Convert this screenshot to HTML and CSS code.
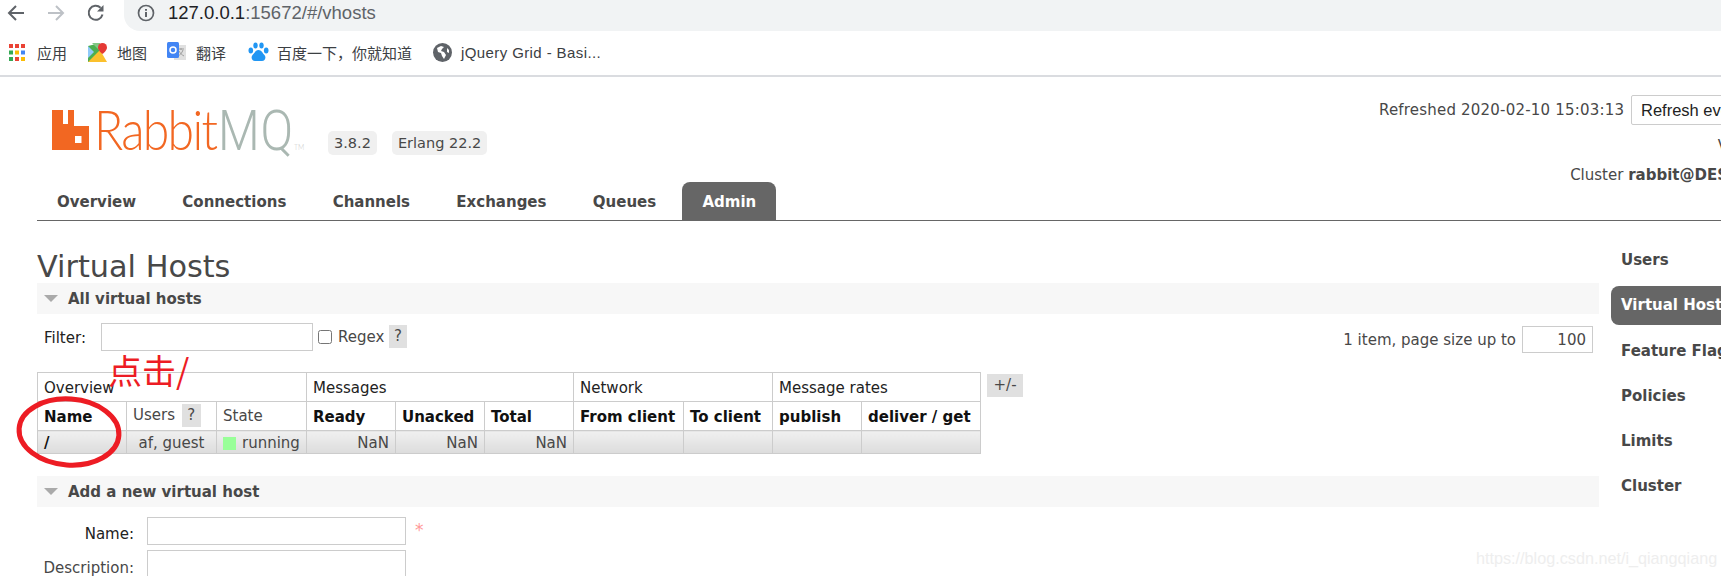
FILE: index.html
```html
<!DOCTYPE html>
<html lang="en">
<head>
<meta charset="utf-8">
<title>RabbitMQ Management</title>
<link rel="stylesheet" href="styles.css">
</head>
<body>
<div class="browser">
  <div class="toolbar">
    <svg class="nav" width="20" height="20" viewBox="0 0 20 20"><path d="M18 10H4M10 3l-7 7 7 7" fill="none" stroke="#5f6368" stroke-width="2"/></svg>
    <svg class="nav" width="20" height="20" viewBox="0 0 20 20"><path d="M2 10h14M10 3l7 7-7 7" fill="none" stroke="#bdc1c6" stroke-width="2"/></svg>
    <svg class="nav" width="20" height="20" viewBox="0 0 20 20"><path d="M16.5 11.5A7 7 0 1 1 14.6 4.8" fill="none" stroke="#5f6368" stroke-width="2"/><path d="M17.5 2v6.5H11z" fill="#5f6368"/></svg>
    <div class="omnibox">
      <svg width="18" height="18" viewBox="0 0 18 18"><circle cx="9" cy="9" r="7.5" fill="none" stroke="#5f6368" stroke-width="1.7"/><path d="M9 8v5M9 5v1.8" stroke="#5f6368" stroke-width="2"/></svg>
      <span class="url"><span class="host">127.0.0.1</span>:15672/#/vhosts</span>
    </div>
  </div>
  <div class="bookmarks">
    <div class="bm bm-apps">
      <svg width="16" height="17" viewBox="0 0 16 17">
        <g><rect x="0" width="4" height="4" fill="#ea4335"/><rect x="6" width="4" height="4" fill="#ea4335"/><rect x="12" width="4" height="4" fill="#ea4335"/>
        <rect y="6.500" width="4" height="4" fill="#34a853"/><rect x="6" y="6.500" width="4" height="4" fill="#fbbc05"/><rect x="12" y="6.500" width="4" height="4" fill="#4285f4"/>
        <rect y="13" width="4" height="4" fill="#34a853"/><rect x="6" y="13" width="4" height="4" fill="#ea4335"/><rect x="12" y="13" width="4" height="4" fill="#fbbc05"/></g>
      </svg>
      <span>应用</span>
    </div>
    <div class="bm bm-map">
      <svg width="19" height="19" viewBox="0 0 19 19"><path d="M0 3l12-3v19H0z" fill="#4caf50"/><path d="M0 19L12 7l7 12z" fill="#fbc02d"/><path d="M0 3l6 6-6 6z" fill="#90caf9"/><path d="M4 0h8v8z" fill="#81c784"/><path d="M14.500 0a4.500 4.500 0 0 1 4.500 4.500c0 3-4.500 6.500-4.500 6.500S10 7.500 10 4.500A4.500 4.500 0 0 1 14.500 0z" fill="#e53935"/></svg>
      <span>地图</span>
    </div>
    <div class="bm bm-tr">
      <svg width="19" height="20" viewBox="0 0 19 20"><rect x="7" y="3" width="12" height="15" fill="#e0e0e0"/><path d="M11 7h6M14 6v2M16 8c-1 3-3 5-5 6M12 9c1 2 3 4 5 5" stroke="#9e9e9e" fill="none"/><rect width="12" height="16" rx="1.500" fill="#4285f4"/><circle cx="6" cy="8" r="3" fill="none" stroke="#fff" stroke-width="1.500"/></svg>
      <span>翻译</span>
    </div>
    <div class="bm bm-paw">
      <svg width="21" height="20" viewBox="0 0 21 20" fill="#2196f3"><ellipse cx="7.500" cy="3.500" rx="2.200" ry="3"/><ellipse cx="13.500" cy="3.500" rx="2.200" ry="3"/><ellipse cx="2.800" cy="8.500" rx="2.300" ry="3"/><ellipse cx="18.200" cy="8.500" rx="2.300" ry="3"/><path d="M10.500 8c3 0 4 3 6 5 2 2.500.5 6-2.500 6h-7c-3 0-4.500-3.500-2.500-6 2-2 3-5 6-5z"/></svg>
      <span>百度一下，你就知道</span>
    </div>
    <div class="bm bm-globe">
      <svg width="19" height="19" viewBox="0 0 19 19"><circle cx="9.500" cy="9.500" r="9.500" fill="#5f6368"/><path d="M8 3L4 5l1 4 3 1 1 3 2 3 2-4-2-3-3-1 1-2 2-2zM14 5l2 2v3l-2-1z" fill="#fff"/></svg>
      <span class="bm-wide">jQuery Grid - Basi...</span>
    </div>
  </div>
</div>

<div class="page">
  <header class="header">
    <div class="logo">
      <svg class="logo-mark" width="37" height="40" viewBox="0 0 37 40"><path fill-rule="evenodd" d="M0 0h11v14h5V0h6v16h15v24H0zM23 26v7h6.500v-7z" fill="#f26722"/></svg>
      <div class="wordmark"><div class="wordmark-inner"><span class="rabbit">Rabbit</span><span class="mq">MQ</span><span class="tm">TM</span></div></div>
      <span class="badge">3.8.2</span>
      <span class="badge">Erlang 22.2</span>
    </div>
    <div class="login">
      <div class="login-row login-refresh"><span class="refreshed">Refreshed 2020-02-10 15:03:13</span>
        <select class="refresh-select"><option>Refresh every 5 seconds</option></select>
      </div>
      <div class="login-row login-vhost">Virtual host</div>
      <div class="login-row login-cluster">Cluster <b>rabbit@DESKTOP-LM2H</b></div>
    </div>
  </header>

  <nav class="tabs">
    <a class="tab">Overview</a>
    <a class="tab">Connections</a>
    <a class="tab">Channels</a>
    <a class="tab">Exchanges</a>
    <a class="tab">Queues</a>
    <a class="tab tab-active">Admin</a>
  </nav>

  <div class="columns">
    <main class="main">
      <h1 class="title">Virtual Hosts</h1>

      <section class="section">
        <h2 class="section-head"><i class="tri"></i>All virtual hosts</h2>
        <div class="filter">
          <label class="filter-label">Filter:</label>
          <input class="field field-filter" type="text">
          <input class="check" type="checkbox">
          <span class="regex">Regex</span>
          <span class="help help-regex">?</span>
          <span class="paging">1 item, page size up to</span>
          <input class="field field-page" type="text" value="100">
        </div>
        <div class="table-wrap">
          <table class="list">
            <colgroup>
              <col class="c-name"><col class="c-users"><col class="c-state"><col class="c-num"><col class="c-num2"><col class="c-num"><col class="c-from"><col class="c-to"><col class="c-num"><col class="c-get">
            </colgroup>
            <tr class="row-group">
              <th colspan="3">Overview</th><th colspan="3">Messages</th><th colspan="2">Network</th><th colspan="2">Message rates</th>
            </tr>
            <tr class="row-head">
              <th class="strong">Name</th><th>Users <span class="help help-users">?</span></th><th>State</th><th class="strong">Ready</th><th class="strong">Unacked</th><th class="strong">Total</th><th class="strong">From client</th><th class="strong">To client</th><th class="strong">publish</th><th class="strong">deliver / get</th>
            </tr>
            <tr class="row-data">
              <td class="vname">/</td><td class="center">af, guest</td><td><span class="status"></span>running</td><td class="num">NaN</td><td class="num">NaN</td><td class="num">NaN</td><td></td><td></td><td></td><td></td>
            </tr>
          </table>
          <span class="help plusminus">+/-</span>
        </div>
      </section>

      <section class="section section-add">
        <h2 class="section-head"><i class="tri"></i>Add a new virtual host</h2>
        <div class="form">
          <div class="form-row"><label class="form-label">Name:</label><input class="field field-form" type="text"><span class="mand">*</span></div>
          <div class="form-row"><label class="form-label label-desc">Description:</label><input class="field field-form" type="text"></div>
        </div>
      </section>
    </main>

    <aside class="side">
      <a class="side-item">Users</a>
      <a class="side-item side-active">Virtual Hosts</a>
      <a class="side-item">Feature Flags</a>
      <a class="side-item">Policies</a>
      <a class="side-item">Limits</a>
      <a class="side-item">Cluster</a>
    </aside>
  </div>
</div>

<div class="note">点击/</div>
<svg class="circle" width="112" height="78" viewBox="0 0 112 78"><ellipse cx="55" cy="39" rx="50" ry="33" fill="none" stroke="#ed1c24" stroke-width="5" transform="rotate(4 55 39)"/></svg>
<div class="watermark">https://blog.csdn.net/i_qiangqiang</div>
</body>
</html>
```
FILE: styles.css
```css
html, body {
  margin: 0;
  padding: 0;
  width: 1721px;
  height: 576px;
  overflow: hidden;
  background: #fff;
}
body {
  position: relative;
  font-family: "DejaVu Sans", Verdana, sans-serif;
  font-size: 15px;
  color: #484848;
}

/* browser chrome */
.browser { height: 77px; box-sizing: border-box; border-bottom: 2px solid #dadce0; }
.toolbar { display: flex; align-items: center; height: 31px; padding-left: 6px; }
.nav { margin-top: -5px; margin-right: 20px; flex: none; }
.nav + .nav + .nav { margin-right: 0; }
.omnibox {
  display: flex; align-items: center; margin-left: 18px; flex: 1; height: 31px; margin-top: -1px;
  background: #f1f3f4; border-radius: 0 0 0 16px; padding-left: 13px; box-sizing: border-box;
}
.omnibox svg { margin-top: -5px; flex: none; }
.url { margin-left: 13px; margin-top: -5px; font: 18.5px "Liberation Sans", sans-serif; color: #5f6368; }
.host { color: #202124; }
.bookmarks { display: flex; align-items: center; height: 44px; box-sizing: border-box; padding-bottom: 2px; font-family: "Liberation Sans", "Noto Sans CJK SC", sans-serif; color: #3c4043; }
.bm { display: flex; align-items: center; flex: none; }
.bm-apps { margin-left: 9px; gap: 12px; width: 79px; }
.bm-map { gap: 10px; width: 79px; }
.bm-tr { gap: 10px; width: 81px; }
.bm-paw { gap: 8px; width: 185px; }
.bm-globe { gap: 9px; }
.bm span { white-space: nowrap; font-size: 15px; }
.bm .bm-wide { letter-spacing: .4px; }

/* rabbit page */
.page { width: 1835px; padding-left: 37px; box-sizing: border-box; }
.header { display: flex; justify-content: space-between; height: 105px; }
.logo { display: flex; align-items: flex-start; padding: 33px 0 0 15px; }
.logo-mark { flex: none; }
.wordmark { width: 234px; flex: none; margin-left: 5px; height: 42px; }
.wordmark-inner {
  margin-top: -11px; white-space: nowrap;
  font: 300 56px/60px "Lato", sans-serif; transform: scaleX(.86); transform-origin: 0 0;
  letter-spacing: -2px;
}
.rabbit { color: #f26722; }
.mq { color: #aab8b2; font-family: "Roboto", sans-serif; font-size: 56px; letter-spacing: 1px; margin-left: 2px; }
.tm { color: #ccc; font-size: 8px; letter-spacing: 0; }
.badge {
  background: #f0f0f0; border-radius: 5px; padding: 0 6px; height: 24px; line-height: 25px; margin-top: 21px; margin-right: 15px; flex: none;
  font-size: 14.5px;
}
.login { text-align: right; padding-top: 18px; width: 500px; }
.login-row { white-space: nowrap; }
.login-refresh { height: 31px; line-height: 30px; }
.refreshed { font-size: 15px; letter-spacing: .2px; }
.refresh-select {
  font: 16.5px "Liberation Sans", sans-serif; height: 30px; width: 204px; margin-left: 2px; background: #fff; border: 1px solid #ccc; border-radius: 2px; color: #222; padding: 0 9px; vertical-align: top; appearance: none;
}
.login-vhost { margin-top: 12px; height: 16px; line-height: 16px; padding-right: 31px; }
.login-cluster { margin-top: 13px; line-height: 16px; padding-right: 8px; }

.tabs { display: flex; height: 38px; border-bottom: 1px solid #666; margin-right: -10px; }
.tab { font-weight: bold; font-size: 15px; height: 38px; line-height: 40px; padding: 0 20px; color: #484848; margin-right: 6.3px; }
.tab-active { background: #666; color: #fff; border-radius: 8px 8px 0 0; }

.columns { display: flex; }
.main { width: 1562px; flex: none; }
.title { margin: 28px 0 0; font-weight: normal; font-size: 30.3px; line-height: 36px; height: 34px; color: #484848; }
.section-head {
  display: flex; align-items: center; margin: 0; height: 31px; background: #f7f7f7; font-size: 15px; color: #484848; font-weight: bold;
}
.tri { width: 0; height: 0; border: 7px solid transparent; border-top: 7px solid #aaa; border-bottom: 0; margin: 0 10px 0 7px; }
.filter { display: flex; align-items: center; height: 27px; margin-top: 9px; padding-right: 6px; }
.filter-label { color: #222; margin-left: 7px; width: 57px; padding-top: 2px; }
.field { border: 1px solid #ccc; box-sizing: border-box; height: 28px; background: #fff; padding: 0 6px; margin: 0; }
.field-filter { width: 212px; }
.check { width: 14px; height: 14px; margin: 0 6px 0 5px; }
.regex { width: 51px; }
.help { background: #e0e0e0; display: inline-block; text-align: center; }
.help-regex { width: 18px; height: 23px; line-height: 23px; }
.paging { margin-left: auto; margin-right: 6px; margin-top: 6px; }
.field-page { width: 71px; height: 27px; text-align: right; font: 15px "DejaVu Sans", sans-serif; color: #484848; margin-top: 6px; }

.table-wrap { display: flex; align-items: flex-start; margin-top: 22px; }
.list { border-collapse: collapse; table-layout: fixed; width: 943px; flex: none; border: 1px solid #ccc; }
.c-name { width: 89px; } .c-users { width: 90px; } .c-state { width: 90px; } .c-num { width: 89px; } .c-num2 { width: 89px; }
.c-from { width: 110px; } .c-to { width: 89px; } .c-get { width: 119px; }
.list th, .list td { border: 1px solid #ccc; padding: 0 6px; text-align: left; font-weight: normal; white-space: nowrap; }
.list .row-group th { height: 26px; color: #222; padding-top: 2px; }
.row-head th { height: 27px; color: #484848; padding-bottom: 1px; }
.list .row-head .strong { font-weight: bold; color: #111; font-size: 15px; padding-top: 1px; padding-bottom: 0; }
.help-users { width: 19px; height: 23px; line-height: 23px; margin-left: 2px; }
.list .row-data td { height: 21px; padding-top: 1px; background: linear-gradient(#f0f0f0, #dcdcdc); }
.list .vname { font-weight: bold; color: #111; }
.list .center { text-align: center; }
.list .num { text-align: right; }
.status { display: inline-block; width: 13px; height: 13px; background: #9f9; margin-right: 6px; vertical-align: -2px; }
.plusminus { width: 36px; height: 23px; line-height: 23px; margin: 2px 0 0 6px; flex: none; }

.section-add { margin-top: 22px; }
.form { padding-top: 10px; }
.form-row { display: flex; align-items: flex-start; margin-bottom: 5px; }
.form-label { width: 97px; text-align: right; margin-right: 13px; padding-top: 9px; color: #222; line-height: 16px; }
.form-label.label-desc { color: #484848; padding-top: 10px; }
.field-form { width: 259px; }
.mand { color: #f99; margin: 0 0 0 9px; font-size: 17px; line-height: 26px; }

.side { margin-left: 12px; padding-top: 20px; width: 300px; flex: none; }
.side-item { display: block; font-weight: bold; font-size: 15px; height: 39px; line-height: 39px; padding-left: 10px; margin-bottom: 6px; white-space: nowrap; color: #484848; }
.side-active { background: #666; color: #fff; border-radius: 8px 0 0 8px; margin-bottom: 7px; }

/* annotations drawn over the screenshot */
.note { position: absolute; left: 108px; top: 350px; font: 34px/40px "Noto Sans CJK SC", sans-serif; color: #ed1c24; }
.circle { position: absolute; left: 14px; top: 393px; }
.watermark { position: absolute; left: 1476px; top: 547px; font: 16.2px/22px "Liberation Sans", sans-serif; color: #eee; }
```
